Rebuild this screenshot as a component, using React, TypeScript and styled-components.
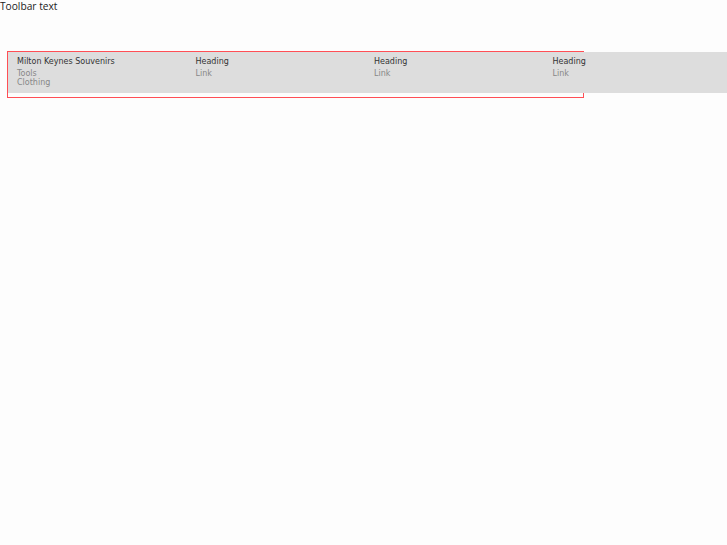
import React from "react";
import styled, { createGlobalStyle } from "styled-components";

const GlobalStyle = createGlobalStyle`
  html, body {
    margin: 0;
    padding: 0;
    background: #fdfdfd;
    overflow: hidden;
  }
`;

const columns = [
  { heading: "Milton Keynes Souvenirs", links: ["Tools", "Clothing"] },
  { heading: "Heading", links: ["Link"] },
  { heading: "Heading", links: ["Link"] },
  { heading: "Heading", links: ["Link"] },
];

export default function App() {
  return (
    <>
      <GlobalStyle />
      <Toolbar>Toolbar text</Toolbar>
      <Content>
        <Frame>
          <Footer>
            {columns.map((col, i) => (
              <Column key={i}>
                <Heading>{col.heading}</Heading>
                <Links>
                  {col.links.map((l) => (
                    <LinkItem key={l}>{l}</LinkItem>
                  ))}
                </Links>
              </Column>
            ))}
          </Footer>
        </Frame>
      </Content>
    </>
  );
}

const Toolbar = styled.div`
  height: 44px;
  font-family: "Open Sans", sans-serif;
  font-size: 10.2px;
  line-height: 12px;
  color: #222;
`;

const Content = styled.div`
  padding: 7px;
`;

const Frame = styled.div`
  width: 575px;
  height: 45px;
  border: 1px solid #ff4f55;
`;

const Footer = styled.div`
  display: grid;
  grid-template-columns: repeat(4, 178.5px);
  width: 719px;
  height: 41px;
  box-sizing: border-box;
  padding: 5px 9px 0;
  background: #dddddd;
  font-family: "DejaVu Sans", sans-serif;
`;

const Column = styled.div`
  display: flex;
  flex-direction: column;
  gap: 3px;
`;

const Heading = styled.div`
  font-size: 8px;
  line-height: 10px;
  color: #333;
`;

const Links = styled.div`
  display: flex;
  flex-direction: column;
`;

const LinkItem = styled.div`
  font-size: 8px;
  line-height: 8.5px;
  color: #888;
`;
